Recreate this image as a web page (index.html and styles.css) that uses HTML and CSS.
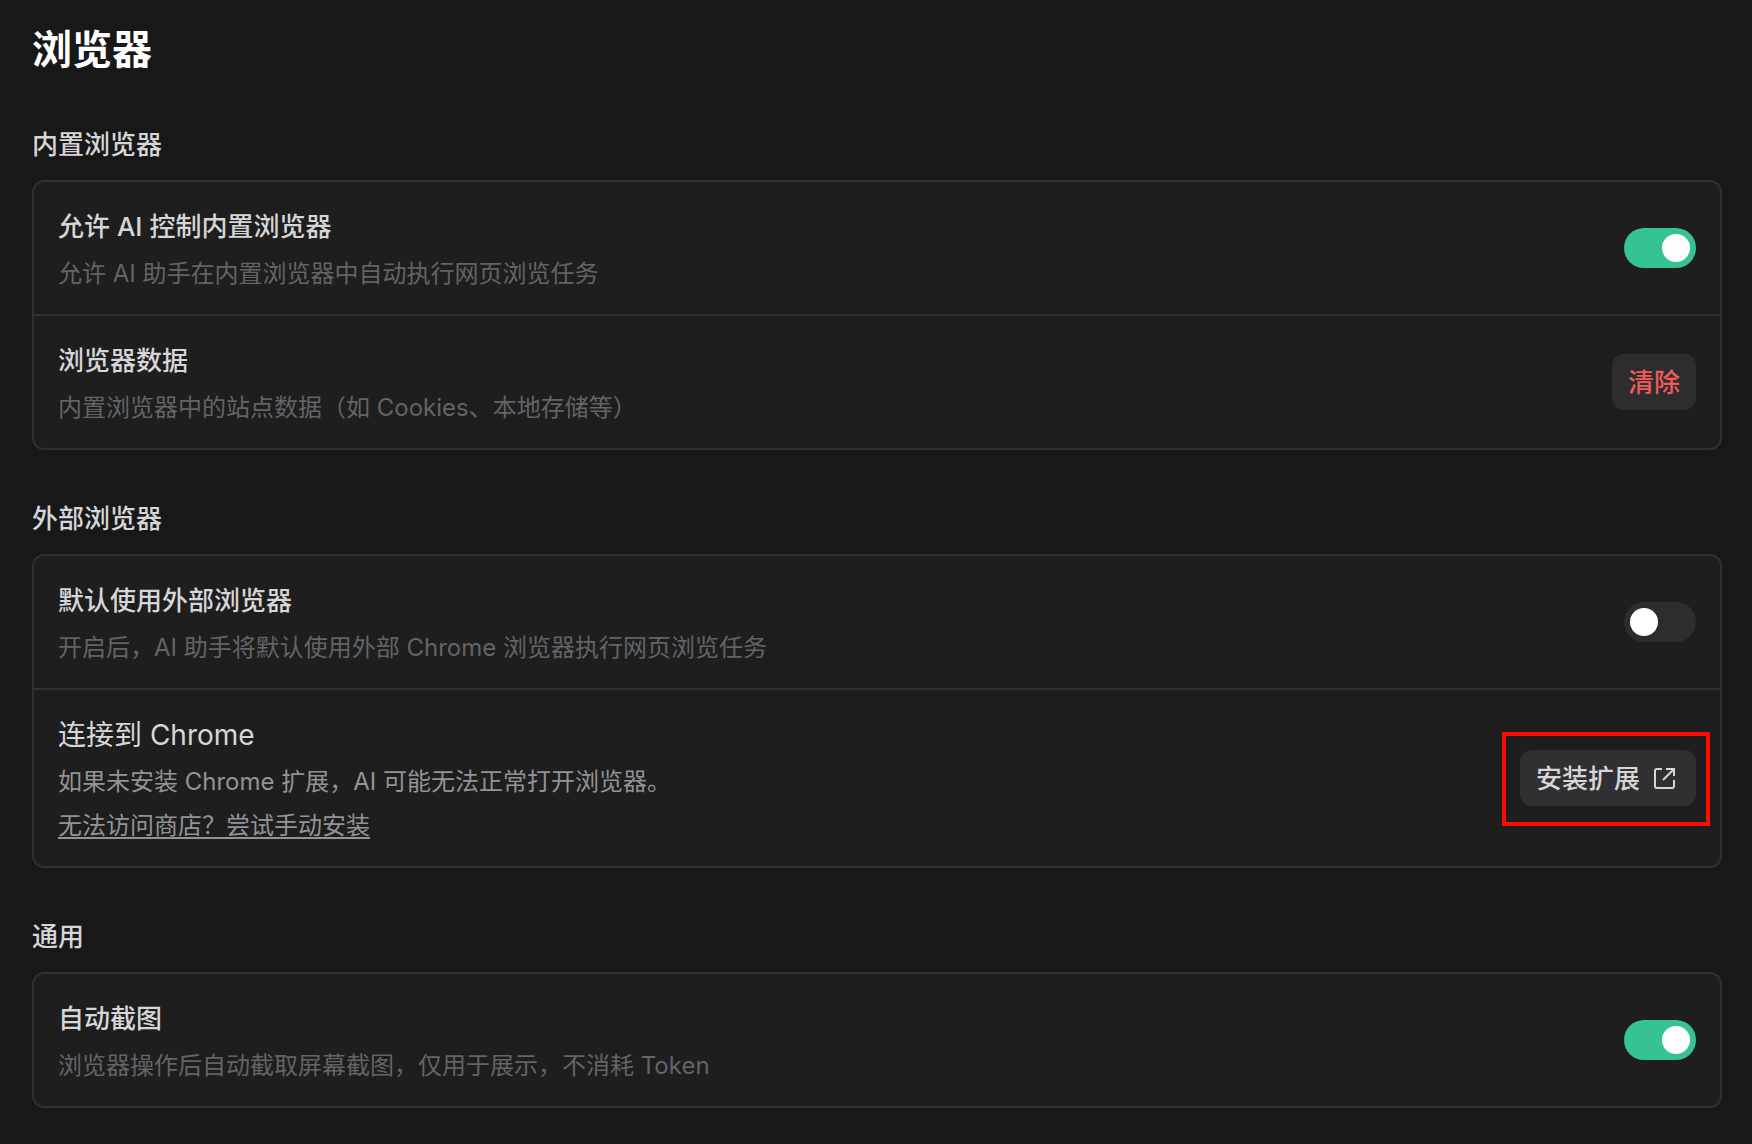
FILE: index.html
```html
<!DOCTYPE html>
<html lang="zh-CN">
<head>
<meta charset="utf-8">
<meta name="viewport" content="width=device-width, initial-scale=1">
<title>浏览器</title>
<link rel="stylesheet" href="styles.css">
</head>
<body>
<main class="settings">
  <h1 class="page-title">浏览器</h1>

  <section class="group">
    <h2 class="group-title">内置浏览器</h2>
    <div class="card">
      <div class="row">
        <div class="row-text">
          <label class="row-title" for="allow-ai">允许 AI 控制内置浏览器</label>
          <p class="row-desc">允许 AI 助手在内置浏览器中自动执行网页浏览任务</p>
        </div>
        <input class="switch" type="checkbox" role="switch" id="allow-ai" checked>
      </div>
      <div class="row">
        <div class="row-text">
          <h3 class="row-title">浏览器数据</h3>
          <p class="row-desc">内置浏览器中的站点数据（如 Cookies、本地存储等）</p>
        </div>
        <button class="button button-danger" type="button">清除</button>
      </div>
    </div>
  </section>

  <section class="group">
    <h2 class="group-title">外部浏览器</h2>
    <div class="card">
      <div class="row">
        <div class="row-text">
          <label class="row-title" for="use-external">默认使用外部浏览器</label>
          <p class="row-desc">开启后，AI 助手将默认使用外部 Chrome 浏览器执行网页浏览任务</p>
        </div>
        <input class="switch" type="checkbox" role="switch" id="use-external">
      </div>
      <div class="row">
        <div class="row-text">
          <h3 class="row-title row-title-large">连接到 Chrome</h3>
          <p class="row-desc row-desc-bright">如果未安装 Chrome 扩展，AI 可能无法正常打开浏览器。</p>
          <a class="row-desc row-desc-bright row-link" href="#">无法访问商店？尝试手动安装</a>
        </div>
        <div class="highlight">
          <button class="button button-install" type="button">
            安装扩展
            <svg class="icon" viewBox="0 0 32 32" aria-hidden="true">
              <path d="M14 6H9Q7 6 7 8V23Q7 25 9 25H24Q26 25 26 23V17M18 6H26V13M26 6L15 17"/>
            </svg>
          </button>
        </div>
      </div>
    </div>
  </section>

  <section class="group">
    <h2 class="group-title">通用</h2>
    <div class="card">
      <div class="row">
        <div class="row-text">
          <label class="row-title" for="auto-shot">自动截图</label>
          <p class="row-desc">浏览器操作后自动截取屏幕截图，仅用于展示，不消耗 Token</p>
        </div>
        <input class="switch" type="checkbox" role="switch" id="auto-shot" checked>
      </div>
    </div>
  </section>
</main>
</body>
</html>
```

FILE: styles.css
```css
* {
  box-sizing: border-box;
}

body {
  margin: 0;
  background: #181818;
  color: #d6d6d8;
  font-family: Inter, "Noto Sans CJK SC", sans-serif;
}

h1, h2, h3, p {
  margin: 0;
}

.settings {
  display: flex;
  flex-direction: column;
  gap: 52px;
  padding: 24px 30px 36px 32px;
}

.page-title {
  color: #fff;
  font-size: 40px;
  font-weight: 600;
  line-height: 52px;
}

.group {
  display: flex;
  flex-direction: column;
  gap: 18px;
}

.group-title {
  font-size: 26px;
  font-weight: 500;
  line-height: 34px;
}

.card {
  border: 2px solid #303031;
  border-radius: 12px;
  background: #1e1e1e;
}

.row {
  display: flex;
  align-items: center;
  justify-content: space-between;
  gap: 24px;
  padding: 0 24px;
}

.row + .row {
  border-top: 2px solid #303031;
}

.row-text {
  display: flex;
  flex-direction: column;
  align-items: flex-start;
  gap: 8px;
  padding: 24px 0 22px;
}

.row-title {
  font-size: 26px;
  font-weight: 500;
  line-height: 42px;
}

.row-title-large {
  font-size: 28px;
  font-weight: 400;
}

.row-desc {
  color: #626468;
  font-size: 24px;
  line-height: 36px;
}

.row-desc-bright {
  color: #929397;
}

.row-link {
  text-decoration: underline;
  text-decoration-thickness: 2px;
  text-underline-offset: 3px;
  text-decoration-skip-ink: none;
}

.switch {
  appearance: none;
  display: flex;
  align-items: center;
  flex: none;
  width: 72px;
  height: 40px;
  margin: 0;
  padding: 0 6px;
  border-radius: 20px;
  background: #2d2d2f;
  cursor: pointer;
}

.switch::before {
  content: "";
  width: 28px;
  height: 28px;
  border-radius: 50%;
  background: #fff;
}

.switch:checked {
  justify-content: flex-end;
  background: #35c391;
}

.button {
  display: flex;
  align-items: center;
  gap: 8px;
  height: 56px;
  padding: 2px 16px 0;
  border: 0;
  border-radius: 12px;
  background: #2d2d2f;
  color: #d6d6d8;
  font: 500 26px/40px Inter, "Noto Sans CJK SC", sans-serif;
  white-space: nowrap;
  cursor: pointer;
}

.button-danger {
  color: #f25a5a;
}

.button-install {
  background: #303032;
}

.icon {
  width: 32px;
  height: 32px;
  fill: none;
  stroke: currentColor;
  stroke-width: 2;
}

/* The frame reaches into the row's padding, so the button stays in line with the other controls. */
.highlight {
  margin: -18px -14px -20px -18px;
  padding: 14px 10px 16px 14px;
  border: 4px solid #fc0d00;
}
```
